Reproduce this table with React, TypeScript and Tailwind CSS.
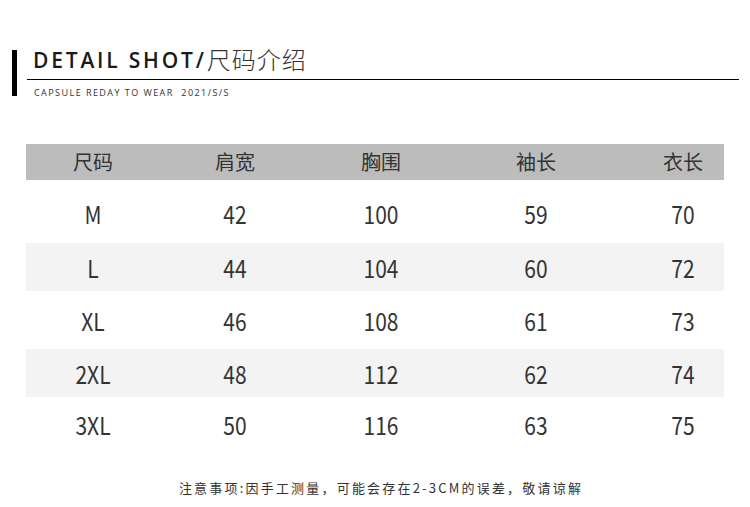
const headers = ["尺码", "肩宽", "胸围", "袖长", "衣长"];

const rows = [
  ["M", "42", "100", "59", "70"],
  ["L", "44", "104", "60", "72"],
  ["XL", "46", "108", "61", "73"],
  ["2XL", "48", "112", "62", "74"],
  ["3XL", "50", "116", "63", "75"],
];

const cols = "grid grid-cols-[134px_150px_142px_168px_126px] text-center";

export default function App() {
  return (
    <div className="relative h-[507px] w-[750px] overflow-hidden bg-white text-[#333]">
      {/* title block */}
      <div className="flex pt-[50px]">
        <div className="ml-[12px] h-[46px] w-[5px] bg-black" />
        <div className="ml-[10px] flex-1 pr-[11px]">
          <div className="flex h-[28px] items-end pb-[7px] pl-[6px]">
            <span className="font-['Open_Sans'] text-[21px] font-semibold leading-none tracking-[2.8px] text-[#1a1a1a]">
              DETAIL SHOT/
            </span>
            <span className="font-['Noto_Sans_CJK_SC'] text-[24px] font-light leading-none tracking-[1px] text-[#333]">
              尺码介绍
            </span>
          </div>
          <div className="mt-[1px] h-px bg-black" />
          <div className="mt-[8px] pl-[7px] font-['Open_Sans'] text-[9px] leading-none tracking-[1.45px] text-[#333]">
            CAPSULE REDAY TO WEAR&nbsp;&nbsp;2021/S/S
          </div>
        </div>
      </div>

      {/* size table */}
      <div className="ml-[26px] mt-[47px] w-[698px] font-['Noto_Sans_CJK_SC',sans-serif]">
        <div className={`${cols} h-[36px] items-center bg-[#bcbcbc] text-[20px] text-[#333]`}>
          {headers.map((h) => (
            <div key={h}>{h}</div>
          ))}
        </div>
        {rows.map((r, i) => (
          <div
            key={r[0]}
            className={`${cols} items-center text-[21px] text-[#333] ${
              i === 0
                ? "h-[63px] pt-[6px]"
                : i % 2 === 1
                ? "h-[48px] bg-[#f3f3f3] pt-[3px]"
                : i === 4
                ? "h-[58px]"
                : "h-[58px] pt-[3px]"
            }`}
          >
            {r.map((c, j) => (
              <div key={j} className="scale-y-[1.16]">
                {c}
              </div>
            ))}
          </div>
        ))}
      </div>

      {/* note */}
      <div className="absolute left-0 right-0 top-[481px] pl-[12px] text-center font-['Noto_Sans_CJK_SC',sans-serif] text-[13px] leading-none tracking-[2.2px] text-[#333]">
        注意事项:因手工测量，可能会存在2-3CM的误差，敬请谅解
      </div>
    </div>
  );
}
